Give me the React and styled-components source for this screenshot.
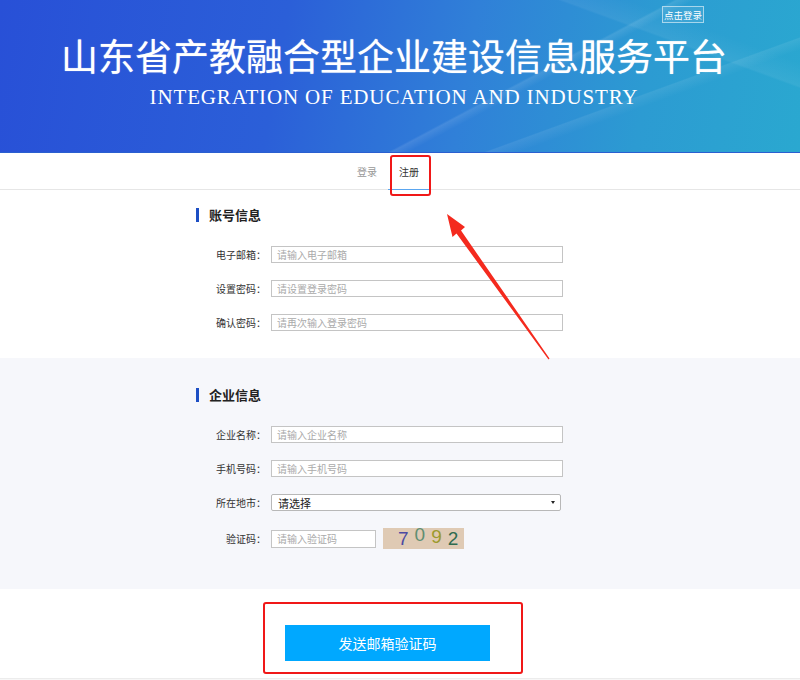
import React from 'react';
import styled, { createGlobalStyle } from 'styled-components';

const GlobalStyle = createGlobalStyle`
    html, body {
        margin: 0;
        padding: 0;
        background: #ffffff;
        font-family: "Noto Sans CJK SC", "Noto Sans", sans-serif;
    }
    * { box-sizing: border-box; }
`;

const Page = styled.div`
    position: relative;
    width: 800px;
    height: 680px;
    overflow: hidden;
`;

const Banner = styled.header`
    position: relative;
    height: 153px;
    display: flex;
    flex-direction: column;
    align-items: center;
    padding: 33px 12px 0 0;
    color: #fff;
    background:
        linear-gradient(152deg, transparent 62%, rgba(255,255,255,0.10) 62.4%, transparent 64%),
        linear-gradient(160deg, transparent 74%, rgba(255,255,255,0.08) 74.3%, transparent 77%),
        linear-gradient(20deg, transparent 80%, rgba(255,255,255,0.06) 80.5%, transparent 86%),
        linear-gradient(100deg, #2850d7 0%, #2b5fd8 35%, #3080d8 58%, #2c9bd2 80%, #2aa8d0 100%);
    border-bottom: 1px solid #2a5fd0;
`;

const Title = styled.h1`
    margin: 0;
    font-size: 37px;
    line-height: 44px;
    font-weight: 400;
    letter-spacing: 0;
    text-shadow: 0 0 1px rgba(255,255,255,0.7);
`;

const Subtitle = styled.div`
    margin-top: 8px;
    font-family: "Liberation Serif", "DejaVu Serif", serif;
    font-size: 21px;
    line-height: 24px;
    letter-spacing: 0.85px;
`;

const LoginLink = styled.a`
    position: absolute;
    top: 6px;
    left: 662px;
    height: 17px;
    padding: 0 1px;
    display: flex;
    align-items: center;
    justify-content: center;
    white-space: nowrap;
    font-size: 9.5px;
    color: #fff;
    border: 1px solid rgba(255,255,255,0.55);
    background: rgba(255,255,255,0.08);
    text-decoration: none;
`;

const TabBar = styled.nav`
    height: 37px;
    display: flex;
    justify-content: center;
    padding-right: 24px;
    border-bottom: 1px solid #e6e6e6;
`;

const Tab = styled.div`
    position: relative;
    width: 42px;
    display: flex;
    align-items: center;
    justify-content: center;
    font-size: 10px;
    color: ${props => props.active ? '#333' : '#999'};
    border-bottom: 1px solid ${props => props.active ? '#5aa6f0' : 'transparent'};
    margin-bottom: -1px;
`;

const TabMark = styled.span`
    position: absolute;
    left: 2px;
    top: 2px;
    width: 41px;
    height: 41px;
    border: 2px solid #f01818;
    border-radius: 3px;
`;

const Section = styled.section`
    background: ${props => props.shaded ? '#f6f7fb' : '#ffffff'};
    padding: ${props => props.shaded ? '30px 0 40px' : '18px 0 10px'};
`;

const Inner = styled.div`
    width: 408px;
    margin: 0 auto;
`;

const SectionTitle = styled.h3`
    margin: 0 0 24px;
    height: 14px;
    line-height: 14px;
    padding-left: 10px;
    border-left: 3px solid #1d4fc4;
    font-size: 13px;
    font-weight: 700;
    color: #222;
`;

const Row = styled.div`
    display: flex;
    align-items: center;
    height: ${props => props.tall ? '21px' : '17px'};
    margin-bottom: ${props => props.tall ? '0' : '17px'};
`;

const Label = styled.label`
    width: 70px;
    margin-right: 5px;
    text-align: right;
    font-size: 10px;
    color: #333;
    white-space: nowrap;
`;

const Input = styled.input`
    width: ${props => props.w || 292}px;
    height: ${props => props.h || 17}px;
    border: 1px solid #c4c4c4;
    padding: 0 5px;
    font-family: inherit;
    font-size: 10px;
    color: #333;
    background: #fff;
    outline: none;
    &::placeholder { color: #aaa; }
`;

const Select = styled.div`
    width: 290px;
    height: 17px;
    display: flex;
    align-items: center;
    justify-content: space-between;
    padding: 0 5px 0 6px;
    border: 1px solid #b8b8b8;
    border-radius: 2px;
    background: #fff;
    font-size: 11px;
    color: #222;
`;

const Caret = styled.span`
    width: 0;
    height: 0;
    border-left: 2px solid transparent;
    border-right: 2px solid transparent;
    border-top: 3px solid #222;
`;

const Captcha = styled.div`
    width: 81px;
    height: 21px;
    margin-left: 7px;
    display: flex;
    align-items: flex-end;
    padding: 0 0 0 15px;
    gap: 6px;
    background: #dfcab4;
    font-family: "Liberation Sans", Arial, sans-serif;
    font-size: 19px;
    line-height: 20px;
`;

const Digit = styled.span`
    color: ${props => props.color};
    transform: translateY(${props => props.lift || 0}px);
`;

const Footer = styled.div`
    padding: 36px 0 17px;
    border-bottom: 1px solid #ececec;
`;

const ButtonWrap = styled.div`
    position: relative;
    width: 205px;
    margin-left: 285px;
`;

const SendButton = styled.button`
    display: block;
    width: 205px;
    height: 36px;
    border: none;
    background: #00a8ff;
    color: #fff;
    font-family: inherit;
    font-size: 14px;
`;

const ButtonMark = styled.span`
    position: absolute;
    left: -22px;
    top: -23px;
    width: 260px;
    height: 72px;
    border: 2px solid #f01818;
    border-radius: 3px;
`;

const Rest = styled.div`
    height: 40px;
    background: #f7f7f7;
`;

const Arrow = styled.svg`
    position: absolute;
    left: 0;
    top: 0;
    pointer-events: none;
`;

const accountFields = [
    { label: '电子邮箱：', placeholder: '请输入电子邮箱' },
    { label: '设置密码：', placeholder: '请设置登录密码' },
    { label: '确认密码：', placeholder: '请再次输入登录密码' },
];

const companyFields = [
    { label: '企业名称：', placeholder: '请输入企业名称' },
    { label: '手机号码：', placeholder: '请输入手机号码' },
];

export default function App() {
    return (
        <Page>
            <GlobalStyle />
            <Banner>
                <Title>山东省产教融合型企业建设信息服务平台</Title>
                <Subtitle>INTEGRATION OF EDUCATION AND INDUSTRY</Subtitle>
                <LoginLink href="#">点击登录</LoginLink>
            </Banner>

            <TabBar>
                <Tab>登录</Tab>
                <Tab active>
                    注册
                    <TabMark />
                </Tab>
            </TabBar>

            <Section>
                <Inner>
                    <SectionTitle>账号信息</SectionTitle>
                    {accountFields.map(f => (
                        <Row key={f.label}>
                            <Label>{f.label}</Label>
                            <Input placeholder={f.placeholder} />
                        </Row>
                    ))}
                </Inner>
            </Section>

            <Section shaded>
                <Inner>
                    <SectionTitle>企业信息</SectionTitle>
                    {companyFields.map(f => (
                        <Row key={f.label}>
                            <Label>{f.label}</Label>
                            <Input placeholder={f.placeholder} />
                        </Row>
                    ))}
                    <Row>
                        <Label>所在地市：</Label>
                        <Select>
                            请选择
                            <Caret />
                        </Select>
                    </Row>
                    <Row tall>
                        <Label>验证码：</Label>
                        <Input w={105} h={18} placeholder="请输入验证码" />
                        <Captcha>
                            <Digit color="#4b4aa3">7</Digit>
                            <Digit color="#5f8f72" lift={-4}>0</Digit>
                            <Digit color="#9c9a2e" lift={-2}>9</Digit>
                            <Digit color="#2f6b50">2</Digit>
                        </Captcha>
                    </Row>
                </Inner>
            </Section>

            <Footer>
                <ButtonWrap>
                    <SendButton>发送邮箱验证码</SendButton>
                    <ButtonMark />
                </ButtonWrap>
            </Footer>
            <Rest />

            <Arrow width="800" height="680" viewBox="0 0 800 680">
                <polygon
                    points="447,214 465,227 461,230.5 549.5,358.5 548.5,359.5 456.5,233.5 452.5,237"
                    fill="#f42a1e"
                />
            </Arrow>
        </Page>
    );
}
